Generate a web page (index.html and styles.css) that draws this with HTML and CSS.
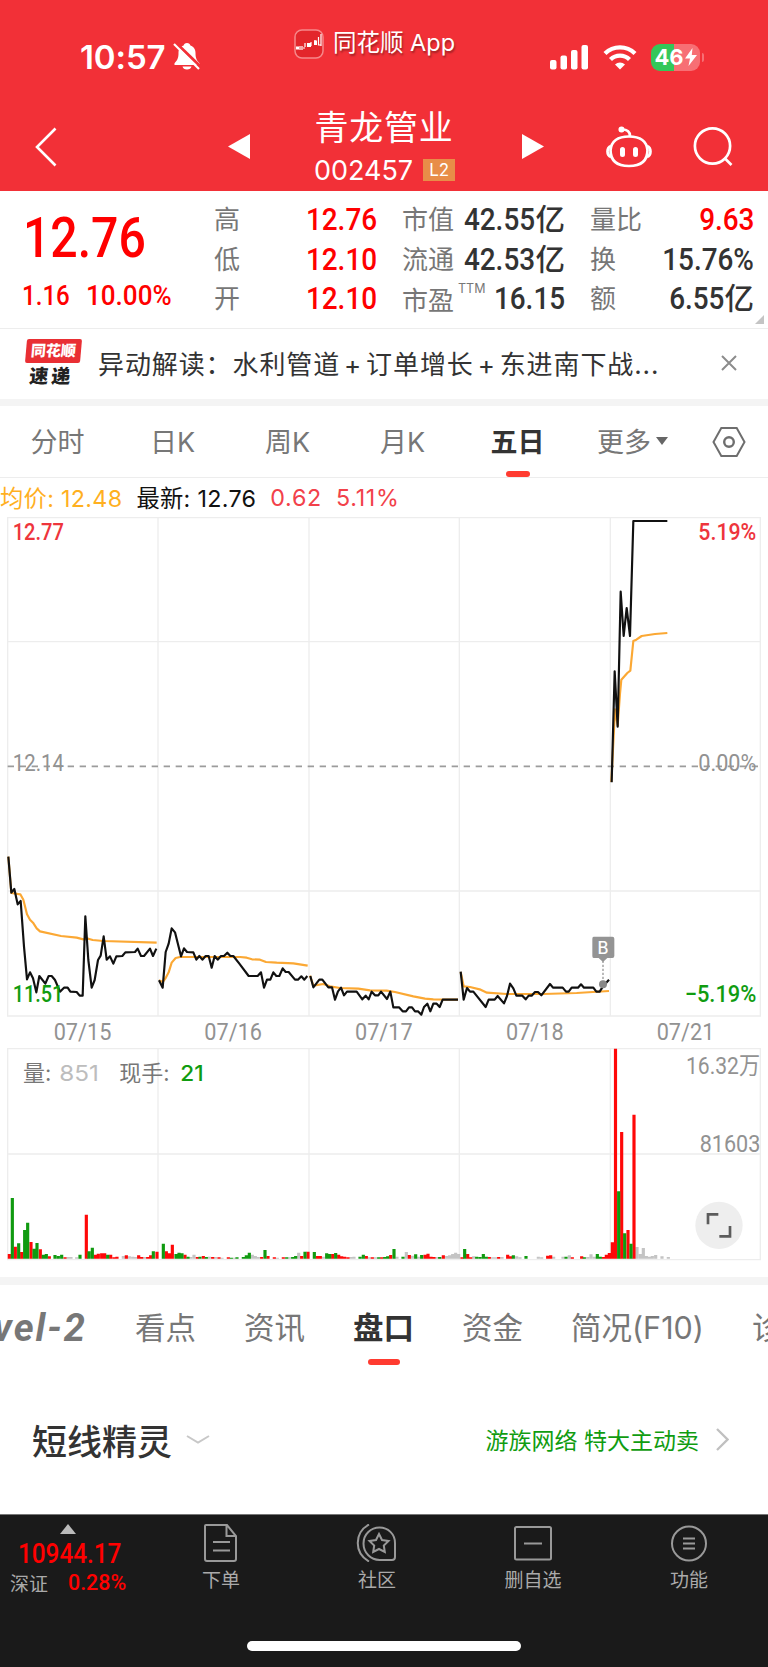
FILE: index.html
```
<!DOCTYPE html>
<html lang="zh-CN">
<head>
    <meta charset="UTF-8">
    <meta name="viewport" content="width=device-width, initial-scale=1.0">
    <title>青龙管业 002457</title>
    <link rel="stylesheet" href="styles.css">
</head>
<body>
    <div class="page">
        <header class="header">
            <div class="status-bar">
                <div class="status-time">
                    <span>10:57</span>
                    <svg width="28" height="30" viewBox="0 0 28 30">
                        <path d="M14 1c-2 0-3 1-3.400 2.400C7 4.500 5.500 7.500 5.500 11c0 5-1 7-4 10.200v1.800h25v-1.800c-3-3.200-4-5.200-4-10.200 0-3.500-1.500-6.500-5.100-7.600C17 2 16 1 14 1zM9.500 24.500a4.600 3.800 0 0 0 9 0z" fill="#fff"/>
                        <path d="M2.500 0.500L28 25" stroke="#f23037" stroke-width="3"/>
                        <path d="M1 2L26 27" stroke="#fff" stroke-width="2.200"/>
                    </svg>
                </div>
                <div class="status-app">
                    <svg width="30" height="30" viewBox="0 0 30 30">
                        <rect x="1" y="1" width="28" height="28" rx="7" fill="#e3262b" stroke="#f6888a" stroke-width="1.500"/>
                        <g fill="none" stroke="#fff" stroke-width="1.200">
                            <path d="M2 19h3M6 17v4M8 17v4M9 19h2M11 14v4M17 13v4M21 11v4M27 5v12M24.500 8v8h2.500"/>
                        </g>
                        <path d="M2 17.500h3v3H2zM13 14h4v4h-4zM20 11.500h3v4.500h-3z" fill="#fff"/>
                    </svg>
                    <span>同花顺 App</span>
                </div>
                <div class="status-icons">
                    <svg width="39" height="25" viewBox="0 0 39 25" fill="#fff">
                        <rect x="0" y="15" width="6.500" height="9.500" rx="2"/>
                        <rect x="10.500" y="10.500" width="6.500" height="14" rx="2"/>
                        <rect x="21" y="5" width="6.500" height="19.500" rx="2"/>
                        <rect x="31.500" y="0" width="6.500" height="24.500" rx="2"/>
                    </svg>
                    <svg width="34" height="25" viewBox="0 0 34 25" fill="none" stroke="#fff" stroke-width="4.300">
                        <path d="M2 8.500a21.500 21.500 0 0 1 30 0"/>
                        <path d="M7.500 14.500a13.500 13.500 0 0 1 19 0"/>
                        <path d="M17 24.500l-5-5a7.200 7.200 0 0 1 10 0z" fill="#fff" stroke="none"/>
                    </svg>
                    <div class="battery">
                        <span>46</span>
                        <svg width="12" height="18" viewBox="0 0 12 18"><path d="M7.500 0L0 10.500h5L3.500 18 12 7H6.800z" fill="#fff"/></svg>
                    </div>
                </div>
            </div>

            <div class="nav-bar">
                <svg class="nav-back" width="22" height="40" viewBox="0 0 22 40"><path d="M20.500 1.500L2 20l18.500 18.500" fill="none" stroke="#fff" stroke-width="2.600"/></svg>
                <svg class="nav-prev" width="22" height="25" viewBox="0 0 22 25"><path d="M22 0v25L0 12.500z" fill="#fff"/></svg>
                <div class="stock">
                    <h1 class="stock-name">青龙管业</h1>
                    <div class="stock-code"><span>002457</span><span class="badge">L2</span></div>
                </div>
                <svg class="nav-next" width="22" height="25" viewBox="0 0 22 25"><path d="M0 0v25l22-12.500z" fill="#fff"/></svg>
                <svg class="nav-robot" width="46" height="42" viewBox="0 0 46 42" fill="none" stroke="#fff" stroke-width="2.700">
                    <path d="M23 10.500c11 0 17.500 4.500 18.500 13.500 0 11-6 16-18.500 16S4.500 35 4.500 24C5.500 15 12 10.500 23 10.500z"/>
                    <path d="M5 20c-2.500 1-3.500 3-3.500 5.500S2.500 30 5 31M41 20c2.500 1 3.500 3 3.500 5.500S43.500 30 41 31M24 10c0-4-2.500-6.500-8-6.500"/>
                    <circle cx="15.500" cy="3.500" r="1.700" fill="#fff"/>
                    <path d="M16.500 23.500v5M29.500 23.500v5" stroke-width="5" stroke-linecap="round"/>
                </svg>
                <svg class="nav-search" width="40" height="40" viewBox="0 0 40 40" fill="none" stroke="#fff" stroke-width="2.700">
                    <circle cx="19.500" cy="19" r="17.600"/>
                    <path d="M31.500 31l7 7"/>
                </svg>
            </div>
        </header>

        <section class="quote">
            <div class="quote-main">
                <div class="price"><span class="num">12.76</span></div>
                <div class="change"><span class="num">1.16</span><span class="num percent">10.00%</span></div>
            </div>
            <dl class="quote-col col-price">
                <div><dt>高</dt><dd class="red"><span class="num">12.76</span></dd></div>
                <div><dt>低</dt><dd class="red"><span class="num">12.10</span></dd></div>
                <div><dt>开</dt><dd class="red"><span class="num">12.10</span></dd></div>
            </dl>
            <dl class="quote-col col-value">
                <div><dt>市值</dt><dd><span class="num">42.55</span>亿</dd></div>
                <div><dt>流通</dt><dd><span class="num">42.53</span>亿</dd></div>
                <div><dt class="low">市盈<sup>TTM</sup></dt><dd><span class="num">16.15</span></dd></div>
            </dl>
            <dl class="quote-col col-volume">
                <div><dt>量比</dt><dd class="red"><span class="num">9.63</span></dd></div>
                <div><dt>换</dt><dd><span class="num">15.76%</span></dd></div>
                <div><dt>额</dt><dd><span class="num">6.55</span>亿</dd></div>
            </dl>
            <i class="corner"></i>
        </section>

        <section class="news">
            <div class="news-logo">
                <span class="logo-top">同花顺</span>
                <span class="logo-bottom">速递</span>
            </div>
            <p class="news-text">异动解读：水利管道<i>+</i>订单增长<i>+</i>东进南下战<b>...</b></p>
            <svg class="news-close" width="16" height="16" viewBox="0 0 16 16"><path d="M1 1l14 14M15 1L1 15" stroke="#8c8c8c" stroke-width="2"/></svg>
        </section>

        <nav class="period-tabs">
            <a>分时</a>
            <a>日K</a>
            <a>周K</a>
            <a>月K</a>
            <a class="active">五日</a>
            <a>更多<i class="caret"></i></a>
            <svg width="34" height="30" viewBox="0 0 34 30" fill="none" stroke="#6e6e6e">
                <path d="M9.300 1h15.400L32.500 15l-7.800 14H9.300L1.500 15z" stroke-width="2"/>
                <circle cx="17" cy="15" r="4.800" stroke-width="2.400"/>
            </svg>
        </nav>

        <div class="legend">
            <span class="avg">均价: 12.48</span>
            <span class="latest">最新: 12.76</span>
            <span class="rise">0.62</span>
            <span class="rise">5.11%</span>
        </div>

        <!-- Price, units are 1/3 px -->
        <svg class="chart" width="768" height="531" viewBox="0 0 2304 1593">
            <path class="grid" d="M23 2H2281V1497H23zM23 374H2281M23 1122H2281M474 2V1497M927 2V1497M1378 2V1497M1831 2V1497"/>
            <path class="zero" d="M23 748H2281"/>
            <g class="axis grey">
                <text x="38" y="761" textLength="154" lengthAdjust="spacingAndGlyphs">12.14</text>
                <text x="2095" y="761" textLength="174" lengthAdjust="spacingAndGlyphs">0.00%</text>
            </g>
            <g class="axis">
                <text class="up" x="38" y="69" textLength="154" lengthAdjust="spacingAndGlyphs">12.77</text>
                <text class="up" x="2095" y="69" textLength="174" lengthAdjust="spacingAndGlyphs">5.19%</text>
            </g>

            <g class="avg-line">
                <path d="M25 1019L34 1128 61 1132 70 1148 81 1192 90 1208 99 1217 110 1234 120 1243 183 1257 230 1262 250 1267 265 1265 278 1269 310 1272 470 1277"/>
                <path d="M477 1390L488 1395 497 1383 506 1366 515 1337 527 1323 540 1320 720 1320 740 1322 756 1327 780 1328 798 1335 830 1337 880 1339 923 1346"/>
                <path d="M930 1376L940 1406 970 1401 990 1408 1020 1413 1075 1415 1110 1420 1160 1421 1185 1425 1240 1438 1275 1445 1300 1447 1374 1448"/>
                <path d="M1382 1365L1391 1408 1410 1410 1442 1418 1461 1427 1520 1431 1630 1431 1730 1428 1827 1422"/>
                <path d="M1834 795L1845 577 1853 625 1860 530 1864 488 1882 468 1891 461 1900 372 1909 368 1925 357 1965 351 2002 348"/>
            </g>
            <g class="price-line">
                <path d="M25 1019L34 1127 43 1116 53 1162 62 1152 72 1289 81 1387 90 1366 99 1384 109 1426 118 1377 136 1400 146 1377 155 1377 165 1389 180 1424 192 1412 203 1412 211 1424 230 1425 239 1436 248 1436 256 1198 265 1329 275 1412 284 1389 294 1329 302 1316 311 1258 320 1328 330 1318 340 1340 349 1318 367 1317 376 1306 405 1305 413 1295 423 1317 432 1317 450 1295 459 1317 469 1295"/>
                <path d="M477 1390L488 1412 497 1305 506 1280 515 1234 525 1246 534 1282 543 1318 552 1294 561 1305 580 1306 589 1328 598 1317 607 1328 617 1317 626 1317 635 1352 644 1317 653 1328 663 1317 672 1317 682 1307 691 1317 700 1317 718 1340 746 1377 773 1377 783 1366 792 1412 801 1388 811 1388 820 1366 829 1377 838 1377 848 1354 857 1365 866 1365 885 1388 894 1388 904 1378 913 1388 922 1377"/>
                <path d="M931 1377L940 1411 958 1388 967 1388 985 1411 996 1411 1005 1448 1014 1423 1023 1412 1032 1435 1041 1424 1070 1424 1087 1447 1097 1436 1106 1447 1115 1424 1125 1435 1135 1435 1143 1424 1161 1446 1171 1424 1180 1471 1197 1471 1208 1483 1218 1483 1227 1471 1236 1471 1245 1483 1254 1483 1264 1493 1272 1470 1282 1460 1291 1483 1300 1460 1310 1460 1319 1470 1328 1448 1374 1448"/>
                <path d="M1382 1364L1391 1448 1401 1413 1410 1424 1420 1424 1457 1470 1466 1448 1484 1448 1493 1437 1512 1459 1521 1437 1530 1400 1540 1414 1549 1436 1567 1436 1577 1447 1586 1436 1595 1436 1605 1425 1614 1425 1624 1435 1650 1401 1659 1412 1688 1412 1698 1424 1706 1424 1715 1412 1734 1412 1743 1402 1752 1412 1780 1412 1789 1424 1799 1424 1809 1408 1827 1388"/>
                <path d="M1835 796L1844 463 1853 629 1862 224 1871 357 1880 273 1890 357 1900 12 2002 12"/>
            </g>

            <!-- Buy marker -->
            <path d="M1809 1331V1402" stroke="#999" stroke-width="4" stroke-dasharray="7 5"/>
            <circle cx="1809" cy="1402" r="12" fill="#888"/>
            <path d="M1781 1259h56q6 0 6 6v52q0 6-6 6h-15l-13 12-13-12h-15q-4 0-4-6v-52q0-6 4-6z" fill="#949494"/>
            <text class="marker" x="1809" y="1311" text-anchor="middle">B</text>

            <g class="axis down">
                <text x="38" y="1456" textLength="152" lengthAdjust="spacingAndGlyphs">11.51</text>
                <text x="2054" y="1456" textLength="215" lengthAdjust="spacingAndGlyphs">−5.19%</text>
            </g>
            <g class="axis grey">
                <text x="161" y="1569" textLength="173" lengthAdjust="spacingAndGlyphs">07/15</text>
                <text x="613" y="1569" textLength="173" lengthAdjust="spacingAndGlyphs">07/16</text>
                <text x="1065" y="1569" textLength="173" lengthAdjust="spacingAndGlyphs">07/17</text>
                <text x="1518" y="1569" textLength="173" lengthAdjust="spacingAndGlyphs">07/18</text>
                <text x="1970" y="1569" textLength="173" lengthAdjust="spacingAndGlyphs">07/21</text>
            </g>
        </svg>

        <!-- Volume -->
        <svg class="chart" width="768" height="229" viewBox="0 0 2304 687">
            <path class="grid" d="M23 2H2281V635H23zM23 318H2281M474 2V635M927 2V635M1378 2V635M1831 2V635"/>
            <g class="bars">
                <path stroke="#c4c4c4" d="M204 632v-5M213 632v-5M230 632v-4M370 632v-8M388 632v-7M398 632v-6M407 632v-5M434 632v-5M572 632v-5M582 632v-12M628 632v-6M647 632v-5M666 632v-3M703 632v-3M757 632v-12M766 632v-8M775 632v-5M832 632v-3M869 632v-4M896 632v-18M970 632v-6M1053 632v-5M1062 632v-6M1108 632v-4M1126 632v-4M1191 632v-6M1219 632v-20M1237 632v-9M1256 632v-6M1311 632v-5M1321 632v-4M1340 632v-8M1349 632v-10M1358 632v-14M1367 632v-18M1376 632v-14M1421 632v-7M1478 632v-4M1487 632v-4M1506 632v-5M1550 632v-7M1560 632v-4M1615 632v-6M1625 632v-4M1661 632v-6M1689 632v-6M1708 632v-10M1763 632v-5M1773 632v-13M1783 632v-6M1911 632v-35M1921 632v-14M1930 632v-32M1939 632v-8M1948 632v-6M1957 632v-8M1967 632v-11M1986 632v-7M2005 632v-5"/>
                <path stroke="#ff0808" d="M28 632v-14M46 632v-36M65 632v-20M93 632v-50M121 632v-28M148 632v-7M195 632v-4M259 632v-132M286 632v-12M295 632v-15M305 632v-16M314 632v-16M332 632v-12M342 632v-4M351 632v-6M379 632v-10M416 632v-10M425 632v-5M443 632v-5M452 632v-10M471 632v-21M499 632v-22M508 632v-16M517 632v-42M555 632v-12M592 632v-5M610 632v-8M638 632v-5M657 632v-4M685 632v-4M785 632v-5M804 632v-8M823 632v-4M850 632v-4M905 632v-8M924 632v-21M952 632v-8M961 632v-8M998 632v-14M1016 632v-12M1025 632v-7M1034 632v-6M1044 632v-4M1099 632v-8M1117 632v-4M1145 632v-4M1172 632v-11M1228 632v-11M1275 632v-12M1284 632v-15M1293 632v-6M1302 632v-5M1330 632v-10M1386 632v-4M1403 632v-14M1412 632v-4M1468 632v-5M1496 632v-5M1523 632v-12M1532 632v-7M1643 632v-9M1652 632v-10M1717 632v-4M1745 632v-7M1810 632v-5M1819 632v-12M1828 632v-17M1837 632v-49M1865 632v-380M1884 632v-86M1902 632v-432M1846.500 632V2"/>
                <path stroke="#109a10" d="M37 632v-182M56 632v-46M74 632v-86M83 632v-108M102 632v-30M111 632v-47M130 632v-12M139 632v-14M165 632v-11M175 632v-8M185 632v-12M240 632v-12M267 632v-22M277 632v-33M323 632v-12M460 632v-22M490 632v-45M528 632v-14M537 632v-18M546 632v-16M564 632v-6M600 632v-6M619 632v-5M694 632v-3M711 632v-4M730 632v-5M739 632v-10M748 632v-18M795 632v-26M860 632v-4M878 632v-5M887 632v-8M915 632v-21M943 632v-20M980 632v-16M989 632v-14M1007 632v-17M1080 632v-6M1090 632v-12M1136 632v-4M1154 632v-5M1163 632v-7M1182 632v-29M1209 632v-6M1247 632v-13M1265 632v-11M1319 632v-5M1394 632v-29M1430 632v-6M1440 632v-5M1450 632v-14M1459 632v-6M1540 632v-10M1578 632v-8M1698 632v-6M1753 632v-4M1792 632v-14M1801 632v-6M1856 632v-202M1874 632v-76M1893 632v-45"/>
            </g>
            <g class="volume-text">
                <text x="69" y="98">量:</text>
                <text x="178" y="98" fill="#bdbdbd" textLength="119" lengthAdjust="spacingAndGlyphs">851</text>
                <text x="358" y="98">现手:</text>
                <text class="down" x="541" y="98" textLength="70" lengthAdjust="spacingAndGlyphs">21</text>
            </g>
            <g class="axis grey">
                <text x="2058" y="78" textLength="222" lengthAdjust="spacingAndGlyphs">16.32万</text>
                <text x="2099" y="313" textLength="182" lengthAdjust="spacingAndGlyphs">81603</text>
            </g>
            <circle cx="2157" cy="532" r="71" fill="#eee"/>
            <path d="M2124 529v-30h31M2190 534v31h-32" fill="none" stroke="#5c5c5c" stroke-width="8"/>
        </svg>

        <nav class="detail-tabs">
            <a class="level">Level-2</a>
            <a>看点</a>
            <a>资讯</a>
            <a class="active">盘口</a>
            <a>资金</a>
            <a>简况<span>(F10)</span></a>
            <a>诊股</a>
        </nav>

        <section class="genie">
            <h2>短线精灵</h2>
            <svg width="24" height="9" viewBox="0 0 24 9"><path d="M1 1l11 6.500L23 1" fill="none" stroke="#c8c8c8" stroke-width="2"/></svg>
            <p>游族网络 特大主动卖</p>
            <svg width="13" height="23" viewBox="0 0 13 23"><path d="M1 1l10.500 10.500L1 22" fill="none" stroke="#c0c0c0" stroke-width="2.300"/></svg>
        </section>

        <footer class="footer">
            <div class="toolbar">
                <div class="index">
                    <i class="arrow-up"></i>
                    <div class="index-value"><span class="num">10944.17</span></div>
                    <div class="index-change"><span>深证</span><span class="num percent">0.28%</span></div>
                </div>
                <a class="tool">
                    <svg width="36" height="38" viewBox="0 0 36 38">
                        <path d="M3 1h21l9 11v23q0 2-2 2H4q-2 0-2-2V2q0-1 1-1zM23.500 1v11H33M10 18h17M10 26.500h17"/>
                    </svg>
                    <span>下单</span>
                </a>
                <a class="tool">
                    <svg width="42" height="38" viewBox="0 0 42 38">
                        <path d="M13 .500C-2 9-2 29 13 37.500M23.500 3.500C32 3.500 39 10 39 19v14q0 3-3 3H23.500C15 36 7.500 29 7.500 19.500S15 3.500 23.500 3.500z"/>
                        <path d="M23 10l3 6 6.500 1-4.700 4.500 1 6.500-5.800-3-5.800 3 1-6.500-4.700-4.500 6.500-1z"/>
                    </svg>
                    <span>社区</span>
                </a>
                <a class="tool">
                    <svg width="40" height="38" viewBox="0 0 40 38">
                        <rect x="2" y="3" width="36" height="32.500" rx="1.500"/>
                        <path d="M11 19.500h18"/>
                    </svg>
                    <span>删自选</span>
                </a>
                <a class="tool">
                    <svg width="36" height="38" viewBox="0 0 36 38">
                        <circle cx="18" cy="19.500" r="17"/>
                        <path d="M12 14.500h12M12 19.500h12M12 24.500h12"/>
                    </svg>
                    <span>功能</span>
                </a>
            </div>
            <div class="home-indicator"></div>
        </footer>
    </div>
</body>
</html>
```
FILE: styles.css
```
:root {
    --brand: #f23037;
    --red: #ff0000;
    --green: #109c10;
    --text: #333;
    --grey: #777;
    --line: #ededed;
}

* {
    margin: 0;
    padding: 0;
    box-sizing: border-box;
}

body {
    background-color: #fff;
    color: var(--text);
    font-family: Inter, "Noto Sans CJK SC", sans-serif;
}

i {
    font-style: normal;
}

svg {
    display: block;
    flex: none;
}

.page {
    width: 768px;
    height: 1667px;
    overflow: hidden;
}

/* narrow digits */
.num {
    display: inline-block;
    font-family: Roboto, sans-serif;
    font-weight: 500;
    transform: scaleX(0.9);
    transform-origin: right center;
}

.red {
    color: var(--red);
}

.header {
    height: 191px;
    background-color: var(--brand);
    color: #fff;
}

.status-bar {
    display: grid;
    grid-template-columns: 294px 256px 1fr;
    height: 100px;
}

.status-time {
    display: flex;
    align-items: center;
    gap: 7px;
    height: 40px;
    margin-top: 37px;
    padding-left: 80px;
    font-size: 33px;
    font-weight: 600;
    letter-spacing: -0.1px;
}

.status-app {
    display: flex;
    align-items: center;
    gap: 9px;
    height: 40px;
    margin-top: 24px;
    font-size: 23.500px;
    line-height: 36px;
    text-shadow: 1px 2px 2px rgba(0, 0, 0, 0.35);
    white-space: nowrap;
}

.status-app span {
    padding-bottom: 3px;
}

.status-icons {
    display: flex;
    align-items: center;
    gap: 14px;
    height: 40px;
    margin-top: 37px;
}

.battery {
    position: relative;
    display: flex;
    align-items: center;
    justify-content: center;
    gap: 1px;
    width: 49px;
    height: 27px;
    border-radius: 9px;
    background: linear-gradient(to right, #34c759 23px, #f76f74 23px);
    font-size: 22px;
    font-weight: 700;
}

.battery::after {
    content: "";
    position: absolute;
    right: -4px;
    top: 9px;
    width: 2px;
    height: 9px;
    border-radius: 0 2px 2px 0;
    background-color: #f76f74;
}

.nav-bar {
    display: grid;
    grid-template-columns: 36px 192px 71px 169px 54px 84px 87px 1fr;
    align-items: start;
}

.nav-back {
    grid-column: 2;
    margin-top: 27px;
    margin-left: -1px;
}

.nav-prev,
.nav-next {
    margin-top: 34px;
}

.nav-next {
    margin-left: 54px;
}

.nav-robot {
    margin-left: 84px;
    margin-top: 26px;
}

.nav-search {
    margin-left: 87px;
    margin-top: 27px;
}

.stock {
    padding: 1px 0 0 1px;
    text-align: center;
    white-space: nowrap;
}

.stock-name {
    height: 52px;
    line-height: 53px;
    font-size: 34px;
    font-weight: 400;
    letter-spacing: 0.7px;
}

.stock-code {
    display: flex;
    align-items: center;
    justify-content: center;
    gap: 10px;
    height: 34px;
    padding-left: 1px;
    font-size: 27px;
}

.badge {
    width: 32px;
    height: 22px;
    line-height: 22px;
    background-color: #e88d48;
    font-size: 17px;
}

.quote {
    position: relative;
    display: flex;
    height: 138px;
    border-bottom: 1px solid var(--line);
}

.quote-main {
    width: 214px;
    padding-left: 22px;
    color: var(--red);
}

.quote-main .num {
    transform: scaleX(0.86);
    transform-origin: left center;
}

.quote-main .percent {
    transform: scaleX(0.93);
}

.price {
    height: 84px;
    padding: 11px 0 0 1px;
    font-size: 56px;
    line-height: 70px;
}

.change {
    display: flex;
    font-size: 28px;
    line-height: 42px;
}

.change .num:first-child {
    width: 64px;
}

.quote-col {
    padding-top: 8px;
}

.quote-col > div {
    display: flex;
    justify-content: space-between;
    height: 39.500px;
    line-height: 40px;
}

.col-price {
    width: 163px;
}

.col-value {
    width: 163px;
    margin-left: 25px;
}

.col-volume {
    width: 164px;
    margin-left: 25px;
}

.quote-col dt {
    padding-top: 1px;
    font-size: 26px;
    color: var(--grey);
    white-space: nowrap;
}

.quote-col dt.low {
    padding-top: 3px;
}

.quote-col sup {
    margin-left: 4px;
    font-size: 12.500px;
    line-height: 1;
    vertical-align: 17px;
}

.quote-col dd {
    font-size: 29.500px;
    font-weight: 500;
    white-space: nowrap;
}

.quote-col .num {
    font-size: 31px;
}

.corner {
    position: absolute;
    right: 4px;
    bottom: 4px;
    border-left: 9px solid transparent;
    border-bottom: 9px solid #c4c4c4;
}

.news {
    display: flex;
    align-items: center;
    height: 77px;
    padding: 0 31px 3px 25px;
    border-bottom: 7px solid #f4f4f4;
}

.news-logo {
    width: 55px;
    margin-right: 18px;
    text-align: center;
    transform: skewX(-5deg);
}

.news-logo span {
    display: block;
    font-weight: 900;
    white-space: nowrap;
}

.logo-top {
    height: 24px;
    border-radius: 2px;
    background-color: #e92f34;
    color: #fff;
    font-size: 15px;
    line-height: 23px;
}

.logo-bottom {
    height: 23px;
    color: #222;
    font-size: 19px;
    line-height: 27px;
    letter-spacing: 3px;
}

.news-text {
    flex: 1;
    font-size: 26px;
    letter-spacing: 0.9px;
    white-space: nowrap;
}

.news-text i {
    display: inline-block;
    width: 26px;
    text-align: center;
}

.news-text b {
    font-weight: 400;
}

.period-tabs {
    display: flex;
    align-items: center;
    height: 72px;
    border-bottom: 1px solid var(--line);
}

.period-tabs a {
    position: relative;
    display: flex;
    align-items: center;
    justify-content: center;
    width: 115px;
    height: 71px;
    padding-bottom: 2px;
    font-size: 27px;
    color: var(--grey);
}

.period-tabs a.active {
    color: var(--text);
    font-weight: 700;
}

.period-tabs svg {
    margin-left: 22px;
}

.active::after {
    content: "";
    position: absolute;
    left: 50%;
    bottom: 0;
    width: 24px;
    height: 6px;
    margin-left: -12px;
    border-radius: 3px;
    background-color: #ff3b30;
}

.caret {
    margin-left: 5px;
    border: 6px solid transparent;
    border-top: 8px solid #666;
    border-bottom: 0;
}

.legend {
    display: flex;
    align-items: center;
    gap: 14px;
    height: 39px;
    padding-bottom: 1px;
    font-size: 23.300px;
    letter-spacing: 0.3px;
    white-space: nowrap;
}

.legend .avg {
    color: #ffb01f;
}

.legend .latest {
    color: #111;
}

.legend .rise {
    color: #f2414a;
    letter-spacing: 0.7px;
}

.grid {
    fill: none;
    stroke: #ededed;
    stroke-width: 4;
}

.zero {
    stroke: #9c9c9c;
    stroke-width: 5;
    stroke-dasharray: 19 17;
}

.axis text {
    font-family: Roboto, "Noto Sans CJK SC", sans-serif;
    font-size: 70px;
    font-weight: 500;
}

.axis.grey text {
    font-weight: 400;
}

.grey {
    fill: #929292;
}

.up {
    fill: #ee353c;
}

.down {
    fill: var(--green);
}

.avg-line,
.price-line {
    fill: none;
    stroke: #fba834;
    stroke-width: 6.500;
    stroke-linejoin: round;
}

.price-line {
    stroke: #111;
}

.marker {
    fill: #fff;
    font-size: 50px;
    font-weight: 500;
}

.bars {
    fill: none;
    stroke-width: 9.500;
}

.volume-text {
    fill: #777;
    font-size: 66px;
}

.volume-text .down {
    fill: var(--green);
    font-weight: 500;
}

.detail-tabs {
    display: flex;
    gap: 48px;
    height: 97px;
    border-top: 8px solid #f4f4f4;
    overflow: hidden;
    font-size: 30.500px;
    color: var(--grey);
    white-space: nowrap;
}

.detail-tabs a {
    position: relative;
    flex: none;
    height: 80px;
    line-height: 86px;
}

.detail-tabs .level {
    width: 153px;
    margin-left: -66px;
    font-family: Roboto, sans-serif;
    font-size: 38px;
    font-weight: 700;
    font-style: italic;
    letter-spacing: 2px;
    text-align: right;
}

.detail-tabs .active {
    color: var(--text);
    font-weight: 700;
}

.detail-tabs .active::after {
    width: 32px;
    margin-left: -16px;
}

.genie {
    display: flex;
    align-items: center;
    height: 140px;
    padding: 0 39px 10px 32px;
}

.genie h2 {
    margin-right: 14px;
    font-size: 35px;
    font-weight: 500;
}

.genie p {
    margin-left: auto;
    margin-right: 17px;
    color: var(--green);
    font-size: 23px;
}

.footer {
    height: 153px;
    padding-top: 8px;
    background-color: #1a1a1a;
    border-top: 1px solid #777;
}

.toolbar {
    display: flex;
    height: 118px;
}

.index {
    width: 143px;
    color: var(--red);
}

.arrow-up {
    display: block;
    width: 0;
    margin: 1px 0 0 60px;
    border: 8.500px solid transparent;
    border-bottom: 10px solid #bbb;
    border-top: 0;
}

.index-value {
    height: 36px;
    padding-left: 18px;
    font-size: 27px;
    line-height: 40px;
}

.index .num {
    transform-origin: left center;
}

.index .percent {
    transform: scaleX(0.95);
}

.index-change {
    display: flex;
    gap: 20px;
    padding-left: 10px;
    font-size: 22.500px;
    line-height: 25px;
}

.index-change span:first-child {
    color: #aaa;
    font-size: 19px;
    line-height: 29px;
}

.tool {
    display: flex;
    flex-direction: column;
    align-items: center;
    width: 156px;
    color: #aaa;
    font-size: 19px;
    line-height: 28px;
}

.tool svg {
    margin: 1px 0 5px;
    fill: none;
    stroke: #999;
    stroke-width: 2;
}

.home-indicator {
    width: 274px;
    height: 10px;
    margin: 0 auto;
    border-radius: 5px;
    background-color: #fff;
}
```
